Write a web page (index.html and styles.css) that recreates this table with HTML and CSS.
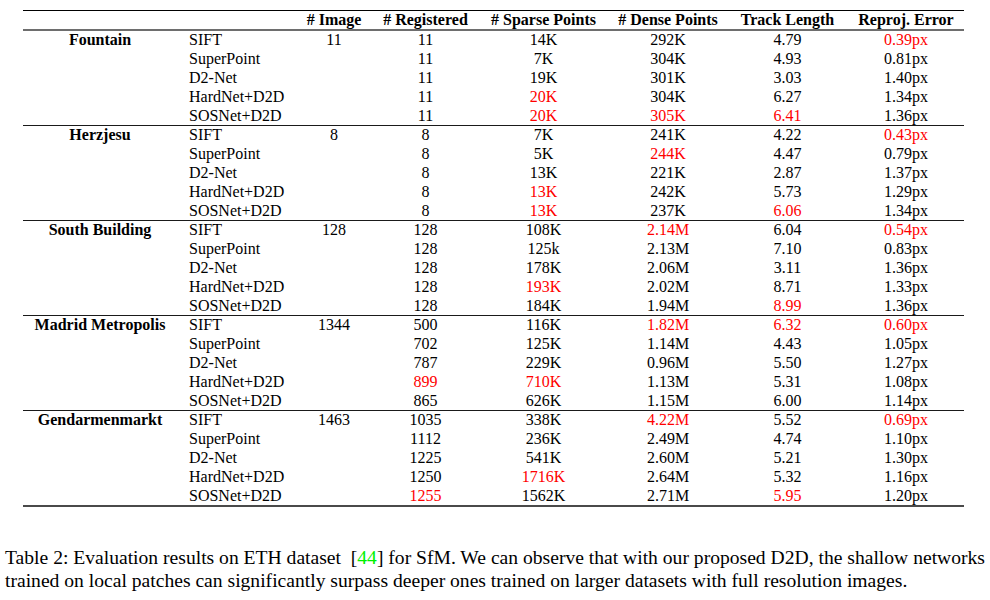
FILE: index.html
```html
<!DOCTYPE html>
<html>
<head>
<meta charset="utf-8">
<link rel="stylesheet" href="styles.css">
</head>
<body>
<table class="results">
  <colgroup>
    <col class="c-data"><col class="c-method"><col class="c-img"><col class="c-reg"><col class="c-sparse"><col class="c-dense"><col class="c-track"><col class="c-err">
  </colgroup>
  <thead>
    <tr>
      <th></th><th></th><th># Image</th><th># Registered</th><th># Sparse Points</th><th># Dense Points</th><th>Track Length</th><th>Reproj. Error</th>
    </tr>
  </thead>
  <tbody class="first">
    <tr><td class="ds">Fountain</td><td class="m">SIFT</td><td>11</td><td>11</td><td>14K</td><td>292K</td><td>4.79</td><td class="hl">0.39px</td></tr>
    <tr><td></td><td class="m">SuperPoint</td><td></td><td>11</td><td>7K</td><td>304K</td><td>4.93</td><td>0.81px</td></tr>
    <tr><td></td><td class="m">D2-Net</td><td></td><td>11</td><td>19K</td><td>301K</td><td>3.03</td><td>1.40px</td></tr>
    <tr><td></td><td class="m">HardNet+D2D</td><td></td><td>11</td><td class="hl">20K</td><td>304K</td><td>6.27</td><td>1.34px</td></tr>
    <tr><td></td><td class="m">SOSNet+D2D</td><td></td><td>11</td><td class="hl">20K</td><td class="hl">305K</td><td class="hl">6.41</td><td>1.36px</td></tr>
  </tbody>
  <tbody>
    <tr><td class="ds">Herzjesu</td><td class="m">SIFT</td><td>8</td><td>8</td><td>7K</td><td>241K</td><td>4.22</td><td class="hl">0.43px</td></tr>
    <tr><td></td><td class="m">SuperPoint</td><td></td><td>8</td><td>5K</td><td class="hl">244K</td><td>4.47</td><td>0.79px</td></tr>
    <tr><td></td><td class="m">D2-Net</td><td></td><td>8</td><td>13K</td><td>221K</td><td>2.87</td><td>1.37px</td></tr>
    <tr><td></td><td class="m">HardNet+D2D</td><td></td><td>8</td><td class="hl">13K</td><td>242K</td><td>5.73</td><td>1.29px</td></tr>
    <tr><td></td><td class="m">SOSNet+D2D</td><td></td><td>8</td><td class="hl">13K</td><td>237K</td><td class="hl">6.06</td><td>1.34px</td></tr>
  </tbody>
  <tbody>
    <tr><td class="ds">South Building</td><td class="m">SIFT</td><td>128</td><td>128</td><td>108K</td><td class="hl">2.14M</td><td>6.04</td><td class="hl">0.54px</td></tr>
    <tr><td></td><td class="m">SuperPoint</td><td></td><td>128</td><td>125k</td><td>2.13M</td><td>7.10</td><td>0.83px</td></tr>
    <tr><td></td><td class="m">D2-Net</td><td></td><td>128</td><td>178K</td><td>2.06M</td><td>3.11</td><td>1.36px</td></tr>
    <tr><td></td><td class="m">HardNet+D2D</td><td></td><td>128</td><td class="hl">193K</td><td>2.02M</td><td>8.71</td><td>1.33px</td></tr>
    <tr><td></td><td class="m">SOSNet+D2D</td><td></td><td>128</td><td>184K</td><td>1.94M</td><td class="hl">8.99</td><td>1.36px</td></tr>
  </tbody>
  <tbody>
    <tr><td class="ds">Madrid Metropolis</td><td class="m">SIFT</td><td>1344</td><td>500</td><td>116K</td><td class="hl">1.82M</td><td class="hl">6.32</td><td class="hl">0.60px</td></tr>
    <tr><td></td><td class="m">SuperPoint</td><td></td><td>702</td><td>125K</td><td>1.14M</td><td>4.43</td><td>1.05px</td></tr>
    <tr><td></td><td class="m">D2-Net</td><td></td><td>787</td><td>229K</td><td>0.96M</td><td>5.50</td><td>1.27px</td></tr>
    <tr><td></td><td class="m">HardNet+D2D</td><td></td><td class="hl">899</td><td class="hl">710K</td><td>1.13M</td><td>5.31</td><td>1.08px</td></tr>
    <tr><td></td><td class="m">SOSNet+D2D</td><td></td><td>865</td><td>626K</td><td>1.15M</td><td>6.00</td><td>1.14px</td></tr>
  </tbody>
  <tbody class="last">
    <tr><td class="ds">Gendarmenmarkt</td><td class="m">SIFT</td><td>1463</td><td>1035</td><td>338K</td><td class="hl">4.22M</td><td>5.52</td><td class="hl">0.69px</td></tr>
    <tr><td></td><td class="m">SuperPoint</td><td></td><td>1112</td><td>236K</td><td>2.49M</td><td>4.74</td><td>1.10px</td></tr>
    <tr><td></td><td class="m">D2-Net</td><td></td><td>1225</td><td>541K</td><td>2.60M</td><td>5.21</td><td>1.30px</td></tr>
    <tr><td></td><td class="m">HardNet+D2D</td><td></td><td>1250</td><td class="hl">1716K</td><td>2.64M</td><td>5.32</td><td>1.16px</td></tr>
    <tr><td></td><td class="m">SOSNet+D2D</td><td></td><td class="hl">1255</td><td>1562K</td><td>2.71M</td><td class="hl">5.95</td><td>1.20px</td></tr>
  </tbody>
</table>
<p class="caption">
  <span class="line">Table 2: Evaluation results on ETH dataset &nbsp;[<span class="ref">44</span>] for SfM. We can observe that with our proposed D2D, the shallow networks</span>
  <span class="line">trained on local patches can significantly surpass deeper ones trained on larger datasets with full resolution images.</span>
</p>
</body>
</html>
```

FILE: styles.css
```css
html, body {
  margin: 0;
  padding: 0;
  background: #ffffff;
}

body {
  font-family: "Liberation Serif", "Times New Roman", serif;
  color: #000000;
}

.results {
  margin: 10px 0 0 23px;
  width: 941px;
  table-layout: fixed;
  border-collapse: separate;
  border-spacing: 0;
  font-size: 16px;
  border-top: 1px solid #000;
  border-bottom: 2px solid #4a4a4a;
}

.c-data { width: 154px; }
.c-method { width: 118px; }
.c-img { width: 78px; }
.c-reg { width: 105px; }
.c-sparse { width: 131px; }
.c-dense { width: 118px; }
.c-track { width: 121px; }
.c-err { width: 116px; }

.results th,
.results td {
  padding: 0;
  text-align: center;
  line-height: 19px;
  white-space: nowrap;
}

.results th {
  font-weight: bold;
  line-height: 18px;
  border-bottom: 2px solid #6e6e6e;
}

.results td.m {
  text-align: left;
  padding-left: 12px;
}

.results td.ds {
  font-weight: bold;
}

.results tbody tr:first-child td {
  border-top: 1px solid #1a1a1a;
  line-height: 18px;
}

.results tbody.first tr:first-child td {
  border-top: none;
  line-height: 18px;
}

.hl {
  color: #ff0000;
}

.caption {
  margin: 39px 0 0 5px;
  font-size: 19.6px;
  line-height: 23px;
}

.caption .line {
  display: block;
  white-space: nowrap;
}

.ref {
  color: #00f000;
}
```
